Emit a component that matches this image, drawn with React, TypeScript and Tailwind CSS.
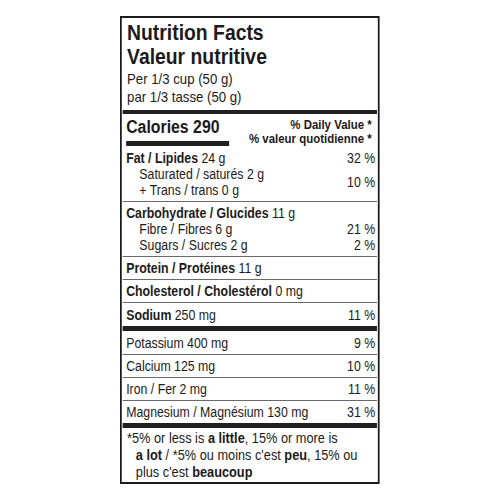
import React from 'react';

const font = { fontFamily: '"Liberation Sans", Arial, sans-serif' };

const Row: React.FC<{ children: React.ReactNode; pct?: string; line?: 'thin' | 'thick'; h?: string }> = ({
  children,
  pct,
  line = 'thin',
  h = 'h-[22px]',
}) => (
  <>
    <div className={`flex justify-between items-center ${h} pl-[4px] pr-[2px]`}>
      <span>{children}</span>
      {pct && <span>{pct}</span>}
    </div>
    {line === 'thin' ? <div className="h-px bg-[#6a6a6a]" /> : <div className="h-[5px] bg-[#231f20]" />}
  </>
);

export default function App() {
  return (
    <div className="w-[500px] h-[500px] bg-white text-[#1c1a1a]" style={font}>
      {/* label is laid out wider then squeezed to get the condensed type */}
      <div className="ml-[120px] mt-[16px] w-[295px] origin-left scale-x-[0.88] border-2 border-[#1c1a1a] px-[1px] text-[14px] leading-[16px]">
        <div className="pl-[5px] pt-[3px] pb-[4px]">
          <div className="text-[22px] leading-[24px] font-bold">Nutrition Facts</div>
          <div className="text-[22px] leading-[24px] font-bold">Valeur nutritive</div>
          <div className="text-[15px] leading-[18px] mt-[1px]">Per 1/3 cup (50 g)</div>
          <div className="text-[15px] leading-[18px]">par 1/3 tasse (50 g)</div>
        </div>
        <div className="h-[4px] bg-[#231f20]" />

        <div className="flex justify-between pl-[4px] pr-[6px] pt-[3px]">
          <div className="flex flex-col">
            <div className="text-[18px] leading-[20px] font-bold">Calories 290</div>
            <div className="h-[5px] w-[117px] bg-[#231f20] mt-[4px]" />
          </div>
          <div className="flex flex-col items-end text-[13px] leading-[14px] font-bold pt-[1px]">
            <span>% Daily Value *</span>
            <span>% valeur quotidienne *</span>
          </div>
        </div>

        <div className="flex justify-between pl-[4px] pr-[2px] pt-[4px] pb-[3px]">
          <div className="flex flex-col">
            <div className="h-[16px]">
              <b>Fat / Lipides</b> 24 g
            </div>
            <div className="pl-[15px] h-[16px]">Saturated / saturés 2 g</div>
            <div className="pl-[15px] h-[16px]">+ Trans / trans 0 g</div>
          </div>
          <div className="flex flex-col items-end">
            <div className="h-[16px]">32 %</div>
            <div className="h-[32px] flex items-center">10 %</div>
          </div>
        </div>
        <div className="h-px bg-[#6a6a6a]" />

        <div className="flex justify-between pl-[4px] pr-[2px] pt-[3px] pb-[3px]">
          <div className="flex flex-col">
            <div className="h-[16px]">
              <b>Carbohydrate / Glucides</b> 11 g
            </div>
            <div className="pl-[15px] h-[16px]">Fibre / Fibres 6 g</div>
            <div className="pl-[15px] h-[16px]">Sugars / Sucres 2 g</div>
          </div>
          <div className="flex flex-col items-end">
            <div className="h-[16px]" />
            <div className="h-[16px]">21 %</div>
            <div className="h-[16px]">2 %</div>
          </div>
        </div>
        <div className="h-px bg-[#6a6a6a]" />

        <Row>
          <b>Protein / Protéines</b> 11 g
        </Row>
        <Row>
          <b>Cholesterol / Cholestérol</b> 0 mg
        </Row>
        <Row pct="11 %" line="thick" h="h-[23px]">
          <b>Sodium</b> 250 mg
        </Row>
        <Row pct="9 %" h="h-[23px]">Potassium 400 mg</Row>
        <Row pct="10 %">Calcium 125 mg</Row>
        <Row pct="11 %">Iron / Fer 2 mg</Row>
        <Row pct="31 %" line="thick">
          Magnesium / Magnésium 130 mg
        </Row>

        <div className="pl-[15px] pr-[4px] pt-[2px] pb-[1px] text-[14.5px] leading-[17px] -indent-[10px]">
          *5% or less is <b>a little</b>, 15% or more is
          <br />
          <b>a lot</b> / *5% ou moins c'est <b>peu</b>, 15% ou
          <br />
          plus c'est <b>beaucoup</b>
        </div>
      </div>
    </div>
  );
}
